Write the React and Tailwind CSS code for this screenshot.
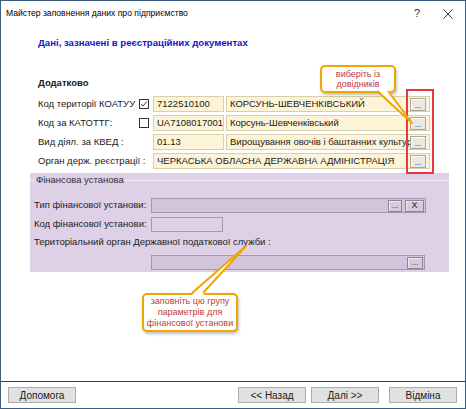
import React from 'react';

const FONT = { fontFamily: "'Liberation Sans', Arial, sans-serif" };

function DotsBtn({ className = '' }) {
  return (
    <div className={`w-[16px] h-[13px] shrink-0 border border-[#aaa597] bg-[#ebe8e1] shadow-[inset_1px_1px_0_#fff] flex items-end justify-center text-[8px] leading-[9px] text-[#222] ${className}`}>
      ...
    </div>
  );
}

function Check({ checked }) {
  return (
    <div className="w-[10px] h-[10px] border border-[#333] bg-white flex items-center justify-center">
      {checked && (
        <svg width="8" height="8" viewBox="0 0 8 8">
          <path d="M1 4 L3 6 L7 1.5" fill="none" stroke="#333" strokeWidth="1" />
        </svg>
      )}
    </div>
  );
}

function Row({ label, check, code, name, full }) {
  return (
    <div className="flex items-center h-[16px]">
      <div className="w-[115px] flex items-center justify-between pr-[4px] whitespace-nowrap">
        <span>{label}</span>
        {check !== undefined && <Check checked={check} />}
      </div>
      {full ? (
        <div className="w-[277px] h-[16px] border border-[#d8cfae] bg-[#fdf4d8] flex items-center pl-[3px] pr-[3px]">
          <span className="flex-1 whitespace-nowrap overflow-hidden">{full}</span>
          <DotsBtn />
        </div>
      ) : (
        <>
          <div className="w-[71px] h-[16px] border border-[#d8cfae] bg-[#fdf4d8] flex items-center pl-[3px] whitespace-nowrap overflow-hidden">
            {code}
          </div>
          <div className="ml-[2px] w-[204px] h-[16px] border border-[#d8cfae] bg-[#fdf4d8] flex items-center pl-[3px] pr-[3px]">
            <span className="flex-1 whitespace-nowrap overflow-hidden">{name}</span>
            <DotsBtn />
          </div>
        </>
      )}
    </div>
  );
}

function GroupBtn({ children, w = 'w-[14px]' }) {
  return (
    <div className={`${w} h-[12px] border border-[#8f8496] bg-[#d6cadd] shadow-[inset_1px_1px_0_#eee6f2] flex items-center justify-center text-[8px] leading-none text-[#222]`}>
      {children}
    </div>
  );
}

function FooterBtn({ children, className = '' }) {
  return (
    <div className={`w-[68px] h-[16px] border border-[#adadad] bg-[#e1e1e1] flex items-center justify-center text-[10px] ${className}`}>
      {children}
    </div>
  );
}

export default function App() {
  return (
    <div className="w-[466px] h-[409px] border border-[#3a5d80] bg-white flex flex-col relative overflow-hidden text-[9.5px] text-[#1a1a1a]" style={FONT}>
      {/* title bar */}
      <div className="h-[25px] flex items-center pl-[5px] shrink-0">
        <span className="text-[8.6px] text-black">Майстер заповнення даних про підприємство</span>
        <span className="ml-auto text-[11px] text-[#333] w-[32px] text-center">?</span>
        <span className="w-[30px] flex justify-center mr-[2px]">
          <svg width="10" height="10" viewBox="0 0 10 10">
            <path d="M0.5 0.5 L9.5 9.5 M9.5 0.5 L0.5 9.5" stroke="#333" strokeWidth="1" />
          </svg>
        </span>
      </div>

      {/* content */}
      <div className="flex-1 relative pl-[29px]">
        <div className="pl-[8px] mt-[10px] leading-[14px] font-bold text-[#1515c8] text-[9.6px]">
          Дані, зазначені в реєстраційних документах
        </div>
        <div className="pl-[8px] mt-[26px] leading-[14px] font-bold">Додатково</div>
        <div className="pl-[8px] mt-[6px] flex flex-col gap-[3px]">
          <Row label="Код території КОАТУУ" check={true} code="7122510100" name="КОРСУНЬ-ШЕВЧЕНКІВСЬКИЙ" />
          <Row label="Код за КАТОТТГ:" check={false} code="UA7108017001" name="Корсунь-Шевченківський" />
          <Row label="Вид діял. за КВЕД :" code="01.13" name="Вирощування овочів і баштанних культур" />
          <Row label="Орган держ. реєстрації :" full="ЧЕРКАСЬКА ОБЛАСНА ДЕРЖАВНА АДМІНІСТРАЦІЯ" />
        </div>

        {/* group box */}
        <div className="mt-[4px] w-[419px] h-[99px] bg-[#ddd0e7] flex flex-col text-[#222]">
          <div className="flex items-center h-[14px]">
            <div className="w-[5px] h-px bg-[#f4eef8]" />
            <span className="px-[1px] text-[#333]">Фінансова установа</span>
            <div className="flex-1 h-px bg-[#f4eef8]" />
          </div>
          <div className="pl-[4px] mt-[11px] flex items-center h-[15px]">
            <span className="w-[117px] whitespace-nowrap">Тип фінансової установи:</span>
            <div className="w-[275px] h-[15px] border border-[#a697ae] bg-[#d2c5da] flex items-center justify-end pr-[1px] gap-[3px]">
              <GroupBtn>...</GroupBtn>
              <GroupBtn w="w-[19px]">
                <span className="text-[9px]">X</span>
              </GroupBtn>
            </div>
          </div>
          <div className="pl-[4px] mt-[4px] flex items-center h-[15px]">
            <span className="w-[117px] whitespace-nowrap">Код фінансової установи:</span>
            <div className="w-[72px] h-[15px] border border-[#a697ae] bg-[#ddd0e7]" />
          </div>
          <div className="pl-[4px] mt-[3px] h-[14px] flex items-center whitespace-nowrap">
            Територіальний орган Державної податкової служби :
          </div>
          <div className="pl-[121px] mt-[6px]">
            <div className="w-[274px] h-[15px] border border-[#a697ae] bg-[#d2c5da] flex items-center justify-end pr-[1px]">
              <GroupBtn w="w-[16px]">...</GroupBtn>
            </div>
          </div>
        </div>

        {/* red highlight */}
        <div className="absolute left-[405px] top-[63px] w-[28px] h-[85px] border-2 border-[#e8393f]" />

        {/* callout 1 */}
        <div className="absolute left-[319px] top-[39px] w-[76px] h-[28px] bg-white border-2 border-[#f0a500] rounded-[5px] shadow-[1px_2px_3px_rgba(0,0,0,0.25)] flex flex-col items-center justify-center text-[9px] leading-[10.5px] text-[#c0393b]">
          <span>виберіть із</span>
          <span>довідників</span>
        </div>
        <svg className="absolute left-[300px] top-[40px]" width="120" height="70" viewBox="0 0 120 70">
          <path d="M76 23 L111 57 L87 23 Z" fill="white" />
          <path d="M76 25 L111 57 L87 25" fill="none" stroke="#f0a500" strokeWidth="2" strokeLinejoin="round" />
        </svg>

        {/* callout 2 */}
        <div className="absolute left-[141px] top-[267px] w-[96px] h-[39px] bg-white border-2 border-[#f0a500] rounded-[5px] shadow-[1px_2px_3px_rgba(0,0,0,0.25)] flex flex-col items-center justify-center text-[9px] leading-[11px] text-[#c0393b]">
          <span>заповніть цю групу</span>
          <span>параметрів для</span>
          <span>фінансової установи</span>
        </div>
        <svg className="absolute left-[180px] top-[215px]" width="80" height="60" viewBox="0 0 80 60">
          <path d="M11 54 L65 5 L22 54 Z" fill="white" />
          <path d="M11 52 L65 5 L22 52" fill="none" stroke="#f0a500" strokeWidth="2" strokeLinejoin="round" />
        </svg>
      </div>

      {/* footer */}
      <div className="h-[27px] shrink-0 border-t border-[#404040] flex items-center pl-[7px] pr-[8px]">
        <FooterBtn>Допомога</FooterBtn>
        <FooterBtn className="ml-auto">&lt;&lt; Назад</FooterBtn>
        <FooterBtn className="ml-[5px]">Далі &gt;&gt;</FooterBtn>
        <FooterBtn className="ml-[10px]">Відміна</FooterBtn>
      </div>
    </div>
  );
}
